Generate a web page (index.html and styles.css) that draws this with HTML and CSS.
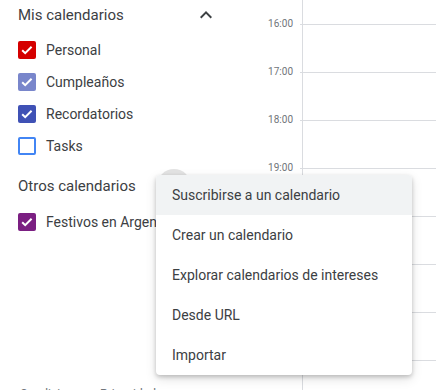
FILE: index.html
```html
<!DOCTYPE html>
<html lang="es">
<head>
    <meta charset="UTF-8">
    <title>Calendario</title>
    <link rel="stylesheet" href="styles.css">
</head>
<body>
    <div class="app">
        <!-- Sidebar with calendar lists -->
        <aside class="sidebar">
            <div class="section-head">
                <span class="section-title">Mis calendarios</span>
                <svg class="chevron" width="24" height="24" viewBox="0 0 24 24"><path d="M7.4 15.4 12 10.8l4.6 4.6L18 14l-6-6-6 6z" fill="#3c4043"/></svg>
            </div>
            <ul class="cal-list">
                <li><span class="box checked red"><svg viewBox="0 0 18 18"><path d="M4.2 9.2l3 3 6.4-6.4" /></svg></span>Personal</li>
                <li><span class="box checked lavender"><svg viewBox="0 0 18 18"><path d="M4.2 9.2l3 3 6.4-6.4" /></svg></span>Cumpleaños</li>
                <li><span class="box checked indigo"><svg viewBox="0 0 18 18"><path d="M4.2 9.2l3 3 6.4-6.4" /></svg></span>Recordatorios</li>
                <li><span class="box empty"></span>Tasks</li>
            </ul>

            <div class="section-head other">
                <span class="section-title">Otros calendarios</span>
                <span class="add-btn"></span>
            </div>
            <ul class="cal-list">
                <li><span class="box checked grape"><svg viewBox="0 0 18 18"><path d="M4.2 9.2l3 3 6.4-6.4" /></svg></span>Festivos en Argentina</li>
            </ul>

            <div class="footer">Condiciones &ndash; Privacidad</div>
        </aside>

        <!-- Day grid (labels under the menu are hidden) -->
        <main class="grid">
            <div class="hour"><span class="label">16:00</span><div class="cell"></div></div>
            <div class="hour"><span class="label">17:00</span><div class="cell"></div></div>
            <div class="hour"><span class="label">18:00</span><div class="cell"></div></div>
            <div class="hour"><span class="label">19:00</span><div class="cell"></div></div>
            <div class="hour"><span class="label"></span><div class="cell"></div></div>
            <div class="hour"><span class="label"></span><div class="cell"></div></div>
            <div class="hour"><span class="label"></span><div class="cell"></div></div>
            <div class="hour"><span class="label"></span><div class="cell"></div></div>
        </main>
    </div>

    <!-- Add calendar menu -->
    <div class="menu">
        <div class="menu-item active">Suscribirse a un calendario</div>
        <div class="menu-item">Crear un calendario</div>
        <div class="menu-item">Explorar calendarios de intereses</div>
        <div class="menu-item">Desde URL</div>
        <div class="menu-item">Importar</div>
    </div>
</body>
</html>
```

FILE: styles.css
```css
body {
    margin: 0;
    font-family: Roboto, "Liberation Sans", Arial, sans-serif;
    color: #3c4043;
    background: #fff;
    overflow: hidden;
}
.app {
    display: flex;
    height: 390px;
}
.sidebar {
    width: 256px;
    flex-shrink: 0;
    padding-left: 18px;
    box-sizing: border-box;
    position: relative;
}
.section-head {
    display: flex;
    align-items: center;
    height: 30px;
    margin-bottom: 4px;
}
.section-head.other {
    height: 32px;
    margin-top: 8px;
}
.section-title {
    font-size: 15px;
    flex: 1;
}
.chevron {
    margin-right: 38px;
}
.add-btn {
    width: 34px;
    height: 34px;
    border-radius: 50%;
    background: #e3e3e3;
    margin-right: 65px;
}
.cal-list {
    list-style: none;
    margin: 0;
    padding: 0;
}
.cal-list li {
    display: flex;
    align-items: center;
    height: 32px;
    font-size: 14px;
    white-space: nowrap;
}
.box {
    width: 18px;
    height: 18px;
    border-radius: 2px;
    box-sizing: border-box;
    margin-right: 10px;
    flex-shrink: 0;
}
.box svg {
    display: block;
    width: 18px;
    height: 18px;
}
.box svg path {
    fill: none;
    stroke: #fff;
    stroke-width: 2;
}
.red { background: #d50000; }
.lavender { background: #7986cb; }
.indigo { background: #3f51b5; }
.grape { background: #7b1f82; }
.empty {
    border: 2px solid #4285f4;
}
.footer {
    position: absolute;
    left: 20px;
    top: 387px;
    font-size: 12px;
    color: #70757a;
}
.grid {
    flex: 1;
    padding-top: 24px;
    position: relative;
}
.grid::before {
    content: "";
    position: absolute;
    left: 46px;
    top: 0;
    bottom: 0;
    border-left: 1px solid #dadce0;
}
.hour {
    display: flex;
    height: 48px;
}
.label {
    width: 37px;
    text-align: right;
    font-size: 10px;
    color: #70757a;
    margin-top: -6px;
    padding-right: 7px;
    line-height: 12px;
    height: 12px;
}
.hour .cell {
    flex: 1;
    border-top: 1px solid #dadce0;
}
.menu {
    position: absolute;
    left: 156px;
    top: 175px;
    width: 256px;
    background: #fff;
    border-radius: 4px;
    box-shadow: 0 2px 4px rgba(0, 0, 0, 0.2), 0 4px 12px rgba(0, 0, 0, 0.12);
    overflow: hidden;
}
.menu-item {
    height: 40px;
    line-height: 40px;
    padding-left: 16px;
    font-size: 14px;
    color: #3c4043;
}
.menu-item.active {
    background: #f1f3f4;
}
```
